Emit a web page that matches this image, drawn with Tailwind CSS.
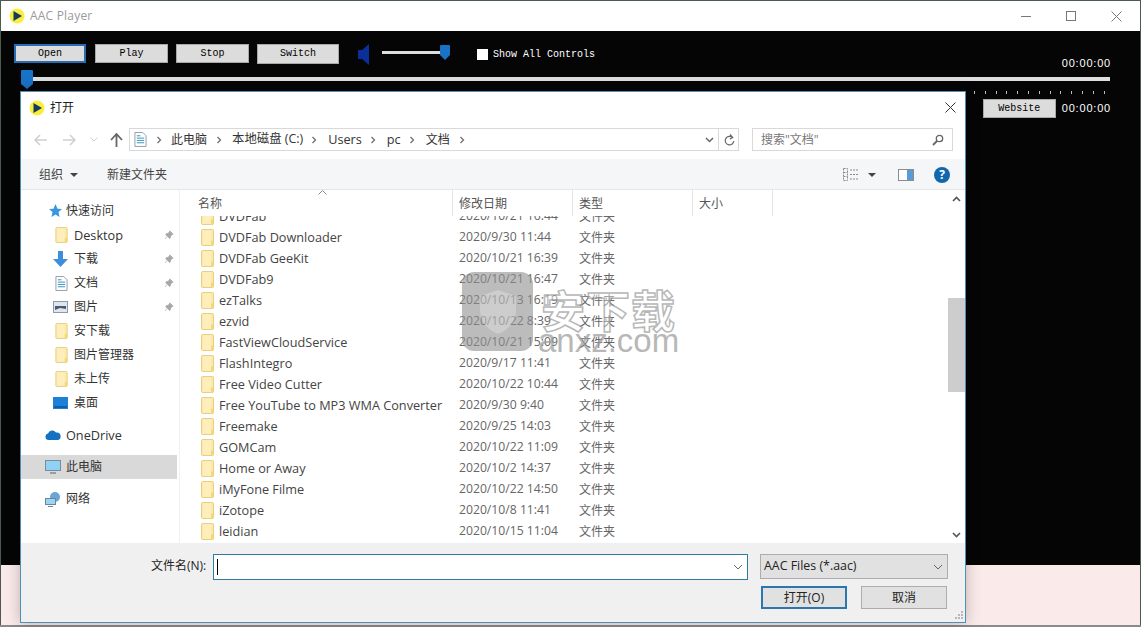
<!DOCTYPE html>
<html lang="zh-CN">
  <head>
    <meta charset="UTF-8" />
    <title>AAC Player</title>
    <script src="https://cdn.jsdelivr.net/npm/@tailwindcss/browser@4"></script>
  </head>
  <body class="w-[1141px] h-[627px] overflow-hidden bg-[#8a8a8a] font-['Open_Sans','Noto_Sans_CJK_SC',sans-serif]">
    <svg class="hidden">
      <symbol id="folder" viewBox="0 0 13 17">
        <rect x=".5" y=".5" width="12" height="16" rx="1" fill="#fde9a6" stroke="#e8cf82"/>
        <path d="M2 1.500h8v14H2z" fill="#feeebb"/>
        <path d="M10 11.500h2.500v5H10z" fill="#f6d777"/>
      </symbol>
      <symbol id="logo" viewBox="0 0 16 16">
        <circle cx="8" cy="8" r="7.5" fill="#f7ef3c"/>
        <path d="M4.500 3 L13 8 L4.500 13z" fill="#163a63"/>
      </symbol>
      <symbol id="pin" viewBox="0 0 12 12">
        <path d="M7 1l4 4-1 .6-1.800 1.200L7.600 9.500 6.700 10.200 1.900 5.400 2.600 4.500 5.200 3.800 6.400 2z M3.800 7.600 1.200 10.800" fill="#a7a7a7" stroke="#a7a7a7" stroke-width=".8"/>
      </symbol>
      <symbol id="crumb" viewBox="0 0 6 8">
        <path d="M1.500 1l3 3-3 3" fill="none" stroke="#6f6f6f" stroke-width="1.300"/>
      </symbol>
      <symbol id="doc" viewBox="0 0 14 16">
        <path d="M1 .5h8.500L13 4v11.500H1z" fill="#fff" stroke="#8a9aa8"/>
        <path d="M3 4h4M3 6.500h8M3 9h8M3 11.500h8" stroke="#2f8fb5" stroke-width="1"/>
      </symbol>
    </svg>

    <!-- AAC Player window -->
    <div class="relative w-[1141px] h-[625px] border-l border-r border-t border-[#4d5a50] bg-white flex flex-col">
      <div class="h-[30px] shrink-0 flex items-center pl-2 text-[#9a9a9a] text-xs">
        <svg class="w-4 h-4"><use href="#logo"/></svg>
        <span class="ml-[5px] tracking-[0.2px]">AAC Player</span>
        <div class="ml-auto flex items-center gap-[35px] pr-[18px]">
          <span class="w-[10px] h-px bg-[#777]"></span>
          <span class="w-[10px] h-[10px] border border-[#777]"></span>
          <svg class="w-[11px] h-[11px]" viewBox="0 0 11 11"><path d="M.5.5l10 10M10.500.5l-10 10" stroke="#777"/></svg>
        </div>
      </div>

      <main class="h-[534px] shrink-0 bg-[#050505] text-white font-['Liberation_Mono',monospace] text-[10px]">
        <div class="flex items-start pl-[13px] pt-[13px] text-black">
          <button class="w-[72px] h-[19px] bg-[#dcdcdc] border-2 border-[#2a6cb0] leading-none">Open</button>
          <button class="ml-[9px] w-[73px] h-[19px] bg-[#dcdcdc] border border-[#a8a8a8] leading-none">Play</button>
          <button class="ml-[8px] w-[73px] h-[19px] bg-[#dcdcdc] border border-[#a8a8a8] leading-none">Stop</button>
          <button class="ml-[8px] w-[82px] h-5 bg-[#dcdcdc] border border-[#a8a8a8] leading-none">Switch</button>
          <svg class="ml-[18px] -mt-[1px] w-[13px] h-[23px]" viewBox="0 0 13 23"><path d="M1 7h4l7-6v21l-7-6H1z" fill="#0b2f96"/></svg>
          <div class="relative ml-3 mt-[7px] w-[63px] h-[3px] bg-[#dedede]">
            <svg class="absolute -right-[5px] -top-[6px] w-[10px] h-[15px]" viewBox="0 0 10 15"><path d="M1 0h8a1 1 0 0 1 1 1v9l-5 5-5-5V1a1 1 0 0 1 1-1z" fill="#1872c8"/></svg>
          </div>
          <span class="ml-[32px] mt-[5px] w-[11px] h-[11px] bg-white"></span>
          <span class="ml-[5px] mt-[5px] text-white leading-[12px]">Show All Controls</span>
        </div>
        <div class="flex justify-end pr-[29px] -mt-[10px] leading-[14px] font-['Liberation_Sans',sans-serif] text-[11px] tracking-[0.8px]">00:00:00</div>
        <div class="relative ml-[26px] mr-[30px] mt-[7px] h-[4px] bg-[#dedede]">
          <svg class="absolute -left-[6px] -top-[7px] w-[12px] h-[19px]" viewBox="0 0 12 19"><path d="M1 0h10a1 1 0 0 1 1 1v13l-6 5-6-5V1a1 1 0 0 1 1-1z" fill="#1872c8"/></svg>
        </div>
        <div class="ml-auto mt-[10px] w-[131px] mr-[35px] h-[3px] bg-[repeating-linear-gradient(90deg,#bbb_0,#bbb_1px,transparent_1px,transparent_10.800px)]"></div>
        <div class="flex items-center justify-end pr-[29px] mt-[5px]">
          <button class="w-[73px] h-[19px] bg-[#dcdcdc] border border-[#a8a8a8] text-black leading-none">Website</button>
          <span class="ml-[6px] font-['Liberation_Sans',sans-serif] text-[11px] tracking-[0.8px]">00:00:00</span>
        </div>
      </main>

      <div class="flex-1 bg-[#fbeaea]"></div>

      <!-- Open file dialog -->
      <section class="absolute left-[19px] top-[90px] w-[946px] h-[532px] bg-white border border-[#4d8fb5] shadow-[0_0_14px_rgba(0,0,0,0.25)] flex flex-col text-[13px] text-[#444]">
        <div class="h-[36px] shrink-0 flex items-center pl-[8px] pr-[9px] pb-[5px] text-[#222] text-xs">
          <svg class="w-4 h-4"><use href="#logo"/></svg>
          <span class="ml-[5px]">打开</span>
          <svg class="ml-auto w-[11px] h-[11px]" viewBox="0 0 11 11"><path d="M.5.5l10 10M10.500.5l-10 10" stroke="#333"/></svg>
        </div>

        <!-- address bar -->
        <div class="h-[31px] shrink-0 flex items-start">
          <div class="w-[108px] h-[23px] flex items-center">
            <svg class="ml-[13px] w-[13px] h-3" viewBox="0 0 13 12"><path d="M6 1L1 6l5 5M1 6h12" fill="none" stroke="#cfcfcf" stroke-width="1.500"/></svg>
            <svg class="ml-[16px] w-[13px] h-3" viewBox="0 0 13 12"><path d="M7 1l5 5-5 5M12 6H0" fill="none" stroke="#cfcfcf" stroke-width="1.500"/></svg>
            <svg class="ml-[14px] w-2 h-[5px]" viewBox="0 0 8 5"><path d="M.5.5L4 4 7.500.5" fill="none" stroke="#cfcfcf"/></svg>
            <svg class="ml-3 w-[13px] h-[14px]" viewBox="0 0 13 14"><path d="M1 7l5.500-6L12 7M6.500 1v13" fill="none" stroke="#666" stroke-width="1.800"/></svg>
          </div>
          <div class="w-[610px] h-[23px] border border-[#d9d9d9] flex items-center pl-[4px] text-xs text-[#333]">
            <svg class="w-[13px] h-[15px]"><use href="#doc"/></svg>
            <svg class="ml-[9px] w-[6px] h-2"><use href="#crumb"/></svg>
            <span class="ml-[9px]">此电脑</span>
            <svg class="ml-[9px] w-[6px] h-2"><use href="#crumb"/></svg>
            <span class="ml-[10px] text-[12.4px]">本地磁盘 (C:)</span>
            <svg class="ml-[8px] w-[6px] h-2"><use href="#crumb"/></svg>
            <span class="ml-[11px] text-[12.7px]">Users</span>
            <svg class="ml-[8px] w-[6px] h-2"><use href="#crumb"/></svg>
            <span class="ml-[11px] text-[12.7px]">pc</span>
            <svg class="ml-[8px] w-[6px] h-2"><use href="#crumb"/></svg>
            <span class="ml-[11px]">文档</span>
            <svg class="ml-[9px] w-[6px] h-2"><use href="#crumb"/></svg>
            <svg class="ml-auto w-[9px] h-[6px]" viewBox="0 0 9 6"><path d="M1 1l3.500 3.500L8 1" fill="none" stroke="#666" stroke-width="1.500"/></svg>
            <span class="ml-[4px] w-px h-full bg-[#d9d9d9]"></span>
            <svg class="ml-[5px] mr-[3px] w-[11px] h-3" viewBox="0 0 11 12"><path d="M8.500 3.500A4.300 4.300 0 1 0 9.800 7M6 .5l2.700 3L5.800 5" fill="none" stroke="#666" stroke-width="1.200"/></svg>
          </div>
          <div class="ml-[13px] w-[201px] h-[23px] border border-[#d9d9d9] flex items-center pl-2 pr-2 text-xs text-[#777]">
            <span>搜索"文档"</span>
            <svg class="ml-auto w-3 h-3" viewBox="0 0 12 12"><circle cx="7.500" cy="4.500" r="3.200" fill="none" stroke="#666" stroke-width="1.300"/><path d="M5 7l-4 4" stroke="#666" stroke-width="1.800"/></svg>
          </div>
        </div>

        <!-- toolbar -->
        <div class="h-[31px] shrink-0 bg-[#f5f6f7] border-b border-[#e6e6e6] flex items-center pl-[18px] pt-[1px] text-xs text-[#444]">
          <span>组织</span>
          <span class="ml-[7px] w-0 h-0 border-x-[4px] border-x-transparent border-t-[4px] border-t-[#444]"></span>
          <span class="ml-[29px]">新建文件夹</span>
          <svg class="ml-auto w-4 h-[13px]" viewBox="0 0 16 13"><path d="M.5.5h4v12h-4zM.5 4.500h4M.5 8.500h4M7 2h9M7 6.500h9M7 11h9" fill="none" stroke="#8c8c8c" stroke-dasharray="2 1"/></svg>
          <span class="ml-[9px] w-0 h-0 border-x-[4px] border-x-transparent border-t-[4px] border-t-[#444]"></span>
          <svg class="ml-[22px] w-4 h-[12px]" viewBox="0 0 16 12"><rect x=".5" y=".5" width="15" height="11" fill="#fff" stroke="#8c8c8c"/><rect x="9" y="1" width="6" height="10" fill="#5b9bd5"/></svg>
          <span class="ml-[20px] mr-[15px] w-4 h-4 rounded-full bg-[#0f67ae] text-white text-[12px] leading-4 font-bold text-center">?</span>
        </div>

        <!-- panes -->
        <div class="flex-1 min-h-0 flex">
          <nav class="w-[156px] shrink-0 pt-[9px] text-xs text-[#333]">
            <div class="h-6 flex items-center pl-[27px]"><svg class="w-[14px] h-[14px]" viewBox="0 0 14 14"><path d="M7.500 0l2 4.700 4.500.4-3.500 3 1 4.900-4-2.600L3.500 13l1-4.900L1 5.100l4.500-.4z" fill="#3a96dd"/></svg><span class="ml-[4px]">快速访问</span></div>
            <div class="h-6 flex items-center pl-[34px]"><svg class="w-[13px] h-[16px]"><use href="#folder"/></svg><span class="ml-[6px] text-[12.7px]">Desktop</span><svg class="ml-auto mr-[3px] w-[10px] h-[10px]"><use href="#pin"/></svg></div>
            <div class="h-6 flex items-center pl-[32px]"><svg class="w-[15px] h-[16px]" viewBox="0 0 15 16"><path d="M5 0h5v8h5l-7.500 8L0 8h5z" fill="#3d8fdc"/></svg><span class="ml-[6px]">下载</span><svg class="ml-auto mr-[3px] w-[10px] h-[10px]"><use href="#pin"/></svg></div>
            <div class="h-6 flex items-center pl-[34px]"><svg class="w-[13px] h-[15px]"><use href="#doc"/></svg><span class="ml-[6px]">文档</span><svg class="ml-auto mr-[3px] w-[10px] h-[10px]"><use href="#pin"/></svg></div>
            <div class="h-6 flex items-center pl-[32px]"><svg class="w-[15px] h-[12px]" viewBox="0 0 15 12"><rect x=".5" y=".5" width="14" height="11" fill="#dfe6ee" stroke="#8a9aa8"/><path d="M2 5h11v3L7 7 2 9z" fill="#4a5a6a"/></svg><span class="ml-[6px]">图片</span><svg class="ml-auto mr-[3px] w-[10px] h-[10px]"><use href="#pin"/></svg></div>
            <div class="h-6 flex items-center pl-[34px]"><svg class="w-[13px] h-[16px]"><use href="#folder"/></svg><span class="ml-[6px]">安下载</span></div>
            <div class="h-6 flex items-center pl-[34px]"><svg class="w-[13px] h-[16px]"><use href="#folder"/></svg><span class="ml-[6px]">图片管理器</span></div>
            <div class="h-6 flex items-center pl-[34px]"><svg class="w-[13px] h-[16px]"><use href="#folder"/></svg><span class="ml-[6px]">未上传</span></div>
            <div class="h-6 flex items-center pl-[32px]"><svg class="w-[15px] h-[12px]" viewBox="0 0 15 12"><rect width="15" height="12" fill="#1c7fd8"/><path d="M1 10h13" stroke="#0b3c6e"/></svg><span class="ml-[6px]">桌面</span></div>
            <div class="mt-2 h-6 flex items-center pl-[24px]"><svg class="w-4 h-[10px]" viewBox="0 0 16 10"><path d="M3.500 10a3.300 3.300 0 0 1-.5-6.500A4.500 4.500 0 0 1 11 2.500 3.800 3.800 0 0 1 12.500 10z" fill="#1470c0"/></svg><span class="ml-[5px] text-[12.7px]">OneDrive</span></div>
            <div class="mt-2 h-6 flex items-center pl-[24px] bg-[#d9d9d9]"><svg class="w-4 h-[14px]" viewBox="0 0 16 14"><rect x=".5" y=".5" width="15" height="10" fill="#8fd2f5" stroke="#7a8a98"/><path d="M5 13h6" stroke="#7a8a98" stroke-width="1.500"/></svg><span class="ml-[5px]">此电脑</span></div>
            <div class="mt-2 h-6 flex items-center pl-[24px]"><svg class="w-4 h-[15px]" viewBox="0 0 16 15"><circle cx="10" cy="5" r="5" fill="#6aa5d8"/><rect x=".5" y="6.500" width="10" height="6" fill="#9ad5f5" stroke="#6f8494"/><path d="M3 14.500h5" stroke="#6f8494"/></svg><span class="ml-[5px]">网络</span></div>
          </nav>

          <div class="w-px bg-[#f0f0f0] ml-[2px]"></div>

          <div class="relative flex-1 min-w-0 flex flex-col text-xs">
            <!-- header -->
            <div class="h-[26px] shrink-0 flex text-[#555]">
              <div class="w-[273px] border-r border-[#e5e5e5] pl-[18px] pt-[6px] relative">名称
                <svg class="absolute left-[138px] top-0 w-[9px] h-[5px]" viewBox="0 0 9 5"><path d="M.5 4.500L4.500.5l4 4" fill="none" stroke="#888"/></svg>
              </div>
              <div class="w-[120px] border-r border-[#e5e5e5] pl-[6px] pt-[6px]">修改日期</div>
              <div class="w-[120px] border-r border-[#e5e5e5] pl-[6px] pt-[6px]">类型</div>
              <div class="w-[80px] border-r border-[#e5e5e5] pl-[6px] pt-[6px]">大小</div>
            </div>
            <!-- file rows -->
            <div class="flex-1 min-h-0 overflow-hidden text-[#666]">
              <div class="-mt-[10px] w-[600px]">
                <div class="h-[21px] flex items-center pl-[21px]"><svg class="w-[13px] h-[17px]"><use href="#folder"/></svg><span class="ml-[5px] w-[240px] text-[12.7px] text-[#444]">DVDFab</span><span class="w-[120px] text-[12.2px]">2020/10/21 16:44</span><span>文件夹</span></div>
                <div class="h-[21px] flex items-center pl-[21px]"><svg class="w-[13px] h-[17px]"><use href="#folder"/></svg><span class="ml-[5px] w-[240px] text-[12.7px] text-[#444]">DVDFab Downloader</span><span class="w-[120px] text-[12.2px]">2020/9/30 11:44</span><span>文件夹</span></div>
                <div class="h-[21px] flex items-center pl-[21px]"><svg class="w-[13px] h-[17px]"><use href="#folder"/></svg><span class="ml-[5px] w-[240px] text-[12.7px] text-[#444]">DVDFab GeeKit</span><span class="w-[120px] text-[12.2px]">2020/10/21 16:39</span><span>文件夹</span></div>
                <div class="h-[21px] flex items-center pl-[21px]"><svg class="w-[13px] h-[17px]"><use href="#folder"/></svg><span class="ml-[5px] w-[240px] text-[12.7px] text-[#444]">DVDFab9</span><span class="w-[120px] text-[12.2px]">2020/10/21 16:47</span><span>文件夹</span></div>
                <div class="h-[21px] flex items-center pl-[21px]"><svg class="w-[13px] h-[17px]"><use href="#folder"/></svg><span class="ml-[5px] w-[240px] text-[12.7px] text-[#444]">ezTalks</span><span class="w-[120px] text-[12.2px]">2020/10/13 16:19</span><span>文件夹</span></div>
                <div class="h-[21px] flex items-center pl-[21px]"><svg class="w-[13px] h-[17px]"><use href="#folder"/></svg><span class="ml-[5px] w-[240px] text-[12.7px] text-[#444]">ezvid</span><span class="w-[120px] text-[12.2px]">2020/10/22 8:39</span><span>文件夹</span></div>
                <div class="h-[21px] flex items-center pl-[21px]"><svg class="w-[13px] h-[17px]"><use href="#folder"/></svg><span class="ml-[5px] w-[240px] text-[12.7px] text-[#444]">FastViewCloudService</span><span class="w-[120px] text-[12.2px]">2020/10/21 15:09</span><span>文件夹</span></div>
                <div class="h-[21px] flex items-center pl-[21px]"><svg class="w-[13px] h-[17px]"><use href="#folder"/></svg><span class="ml-[5px] w-[240px] text-[12.7px] text-[#444]">FlashIntegro</span><span class="w-[120px] text-[12.2px]">2020/9/17 11:41</span><span>文件夹</span></div>
                <div class="h-[21px] flex items-center pl-[21px]"><svg class="w-[13px] h-[17px]"><use href="#folder"/></svg><span class="ml-[5px] w-[240px] text-[12.7px] text-[#444]">Free Video Cutter</span><span class="w-[120px] text-[12.2px]">2020/10/22 10:44</span><span>文件夹</span></div>
                <div class="h-[21px] flex items-center pl-[21px]"><svg class="w-[13px] h-[17px]"><use href="#folder"/></svg><span class="ml-[5px] w-[240px] text-[12.7px] text-[#444]">Free YouTube to MP3 WMA Converter</span><span class="w-[120px] text-[12.2px]">2020/9/30 9:40</span><span>文件夹</span></div>
                <div class="h-[21px] flex items-center pl-[21px]"><svg class="w-[13px] h-[17px]"><use href="#folder"/></svg><span class="ml-[5px] w-[240px] text-[12.7px] text-[#444]">Freemake</span><span class="w-[120px] text-[12.2px]">2020/9/25 14:03</span><span>文件夹</span></div>
                <div class="h-[21px] flex items-center pl-[21px]"><svg class="w-[13px] h-[17px]"><use href="#folder"/></svg><span class="ml-[5px] w-[240px] text-[12.7px] text-[#444]">GOMCam</span><span class="w-[120px] text-[12.2px]">2020/10/22 11:09</span><span>文件夹</span></div>
                <div class="h-[21px] flex items-center pl-[21px]"><svg class="w-[13px] h-[17px]"><use href="#folder"/></svg><span class="ml-[5px] w-[240px] text-[12.7px] text-[#444]">Home or Away</span><span class="w-[120px] text-[12.2px]">2020/10/2 14:37</span><span>文件夹</span></div>
                <div class="h-[21px] flex items-center pl-[21px]"><svg class="w-[13px] h-[17px]"><use href="#folder"/></svg><span class="ml-[5px] w-[240px] text-[12.7px] text-[#444]">iMyFone Filme</span><span class="w-[120px] text-[12.2px]">2020/10/22 14:50</span><span>文件夹</span></div>
                <div class="h-[21px] flex items-center pl-[21px]"><svg class="w-[13px] h-[17px]"><use href="#folder"/></svg><span class="ml-[5px] w-[240px] text-[12.7px] text-[#444]">iZotope</span><span class="w-[120px] text-[12.2px]">2020/10/8 11:41</span><span>文件夹</span></div>
                <div class="h-[21px] flex items-center pl-[21px]"><svg class="w-[13px] h-[17px]"><use href="#folder"/></svg><span class="ml-[5px] w-[240px] text-[12.7px] text-[#444]">leidian</span><span class="w-[120px] text-[12.2px]">2020/10/15 11:04</span><span>文件夹</span></div>
              </div>
            </div>

            <!-- scrollbar -->
            <div class="absolute right-0 top-0 bottom-0 w-[17px] flex flex-col items-center">
              <svg class="mt-[6px] w-[9px] h-[6px]" viewBox="0 0 9 6"><path d="M1 5l3.500-3.500L8 5" fill="none" stroke="#555" stroke-width="1.600"/></svg>
              <div class="mt-[96px] w-full h-[94px] bg-[#cdcdcd]"></div>
              <svg class="mt-auto mb-[5px] w-[9px] h-[6px]" viewBox="0 0 9 6"><path d="M1 1l3.500 3.500L8 1" fill="none" stroke="#555" stroke-width="1.600"/></svg>
            </div>

            <!-- watermark -->
            <div class="absolute left-[282px] top-[82px] w-[71px] h-[79px] rounded-[12px] bg-[#8f8f8f]/60 flex items-center justify-center pointer-events-none">
              <svg class="w-9 h-11" viewBox="0 0 36 44"><path d="M18 0l18 6v14c0 12-8 20-18 24C8 40 0 32 0 20V6z" fill="#fff" fill-opacity=".25"/></svg>
            </div>
            <div class="absolute left-[358px] top-[94px] pointer-events-none text-center opacity-70 font-['Liberation_Sans',sans-serif]">
              <div class="text-[44px] leading-[50px] font-bold tracking-[1px] font-['Noto_Sans_CJK_SC',sans-serif] text-white/60 [-webkit-text-stroke:1.5px_#9a9a9a]">安下载</div>
              <div class="text-[33px] leading-[28px] -mt-[7px] text-[#9a9a9a]">anxz.com</div>
            </div>
          </div>
        </div>

        <!-- bottom bar -->
        <div class="h-[79px] shrink-0 bg-[#f0f0f0] relative text-xs text-[#222]">
          <div class="flex items-start pt-[11px] pl-[130px]">
            <span class="w-[57px] leading-[24px]">文件名(N):</span>
            <div class="ml-[5px] w-[535px] h-[26px] bg-white border border-[#2f7a9f] flex items-center pl-[3px] pr-[4px]">
              <span class="w-px h-[16px] bg-black"></span>
              <svg class="ml-auto w-[10px] h-[6px]" viewBox="0 0 10 6"><path d="M1 1l4 4 4-4" fill="none" stroke="#666"/></svg>
            </div>
            <div class="ml-3 w-[188px] h-[25px] bg-[#e1e1e1] border border-[#adadad] flex items-center pl-[3px] pr-[4px]">
              <span class="text-[12.4px]">AAC Files (*.aac)</span>
              <svg class="ml-auto w-[10px] h-[6px]" viewBox="0 0 10 6"><path d="M1 1l4 4 4-4" fill="none" stroke="#666"/></svg>
            </div>
          </div>
          <div class="flex justify-end gap-[14px] pr-[18px] mt-[6px]">
            <button class="w-[86px] h-[23px] bg-[#e1e1e1] border-2 border-[#2a77ae] leading-none">打开(O)</button>
            <button class="w-[86px] h-[23px] bg-[#e1e1e1] border border-[#adadad] leading-none">取消</button>
          </div>
          <svg class="absolute right-[2px] bottom-[2px] w-[9px] h-[9px]" viewBox="0 0 9 9"><path d="M7 0h2v2H7zM4 3h2v2H4zM7 3h2v2H7zM1 6h2v2H1zM4 6h2v2H4zM7 6h2v2H7z" fill="#b8b8b8"/></svg>
        </div>
      </section>
    </div>
  </body>
</html>
